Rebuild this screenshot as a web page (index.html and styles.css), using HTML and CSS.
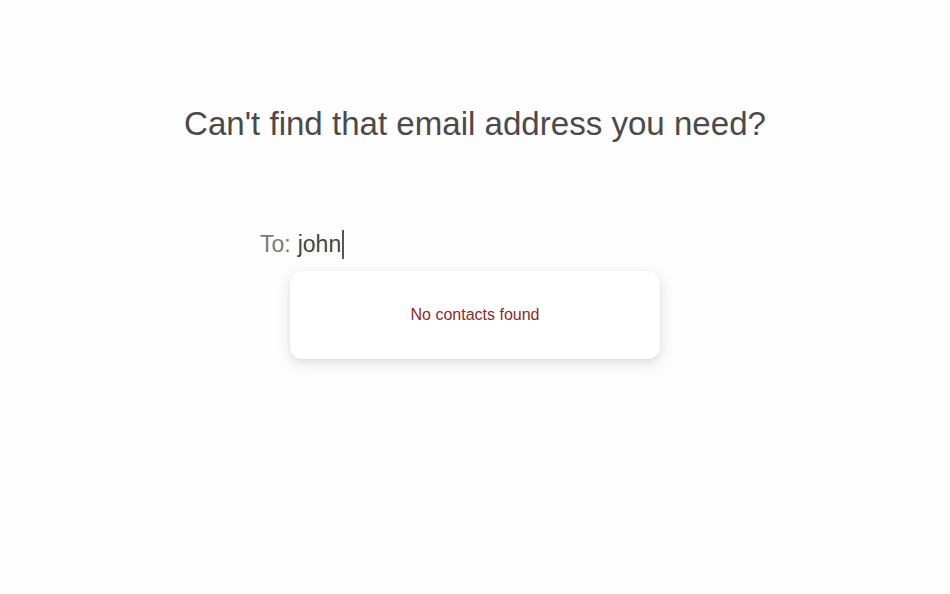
FILE: index.html
```html
<!DOCTYPE html>
<html>
<head>
<meta charset="utf-8">
<link rel="stylesheet" href="styles.css">
</head>
<body>
<main class="page">
  <h1 class="title">Can't find that email address you need?</h1>
  <div class="compose">
    <div class="to-row">
      <span class="to-label">To:</span>
      <span class="to-value">john</span><span class="caret"></span>
    </div>
    <div class="dropdown">
      <p class="empty">No contacts found</p>
    </div>
  </div>
</main>
</body>
</html>
```
FILE: styles.css
```css
html, body {
  margin: 0;
  padding: 0;
  background: #fdfdfd;
}
body {
  font-family: "Liberation Sans", Arial, Helvetica, sans-serif;
  width: 950px;
  height: 594px;
  overflow: hidden;
}
.page {
  display: flex;
  flex-direction: column;
  align-items: center;
  padding-top: 102px;
}
.title {
  margin: 0;
  font-size: 33.1px;
  font-weight: 400;
  line-height: 44px;
  color: #4a4a4a;
}
.compose {
  width: 430px;
  margin-top: 83px;
  display: flex;
  flex-direction: column;
}
.to-row {
  display: flex;
  align-items: center;
  height: 30px;
  font-size: 23px;
}
.to-label {
  color: #7a7a7a;
  margin-right: 7px;
}
.to-value {
  color: #444;
}
.caret {
  width: 1.5px;
  height: 29px;
  background: #555;
  margin-left: 1px;
}
.dropdown {
  margin-top: 12px;
  margin-left: 30px;
  width: 370px;
  height: 88px;
  background: #fff;
  border-radius: 12px;
  box-shadow: 0 4px 14px rgba(0, 0, 0, 0.12), 0 1px 3px rgba(0, 0, 0, 0.05);
  display: flex;
  align-items: center;
  justify-content: center;
}
.empty {
  margin: 0;
  font-size: 16px;
  color: #8a2b2b;
}
```
